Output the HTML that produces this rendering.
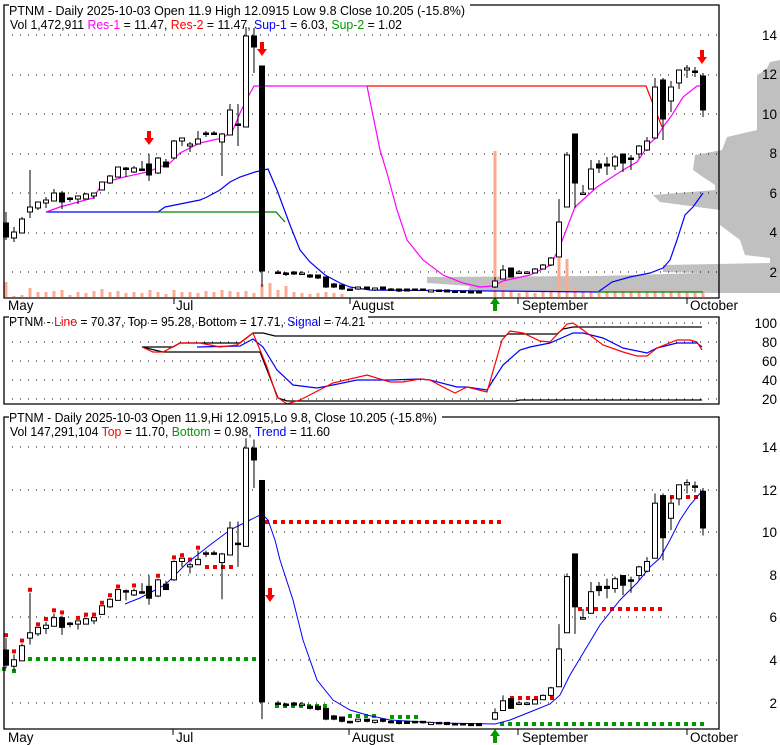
<!DOCTYPE html>
<html><head><meta charset="utf-8"><style>
html,body{margin:0;padding:0;background:#fff;overflow:hidden;}
svg{display:block;font-family:"Liberation Sans",Arial,sans-serif;font-size:12.5px;}
.ax{font-size:13.5px;}
</style></head><body>
<svg id="s" width="780" height="745" xmlns="http://www.w3.org/2000/svg">
<rect width="780" height="745" fill="#fff"/>
<polygon fill="#c0c0c0" points="780,60 770,62 766,70 757,75 757,130 727,137 722,150 695,155 693,170 700,175 715,185 715,190 653,195 660,202 720,210 720,225 740,240 745,255 770,258 770,263 663,265 663,272 700,273 600,276 427,277 427,283 470,286 468,290 719,293 780,293"/>
<g id="g"></g>
<g fill="none" stroke="#000" stroke-width="1.3">
<polyline points="470,5 719,5 719,298 4,298 4,5 9,5"/>
<polyline points="368,317 719,317 719,404 4,404 4,317 9,317"/>
<polyline points="442,417 719,417 719,729 4,729 4,417 9,417"/>
</g>
<g stroke="#000" stroke-width="1">
<line x1="174" y1="298" x2="174" y2="304"/><line x1="350" y1="298" x2="350" y2="304"/><line x1="518" y1="298" x2="518" y2="304"/><line x1="687" y1="298" x2="687" y2="304"/>
<line x1="173" y1="729" x2="173" y2="735"/><line x1="349" y1="729" x2="349" y2="735"/><line x1="518" y1="729" x2="518" y2="735"/><line x1="687" y1="729" x2="687" y2="735"/>
</g>
<g fill="#000">
<text x="9" y="15" textLength="456" lengthAdjust="spacingAndGlyphs">PTNM - Daily 2025-10-03 Open 11.9  High 12.0915  Low 9.8  Close 10.205 (-15.8%)</text>
<text x="10" y="29" textLength="392" lengthAdjust="spacingAndGlyphs">Vol 1,472,911 <tspan fill="#ff00ff">Res-1</tspan> = 11.47, <tspan fill="#ff0000">Res-2</tspan> = 11.47, <tspan fill="#0000ff">Sup-1</tspan> = 6.03, <tspan fill="#009900">Sup-2</tspan> = 1.02</text>
<text x="9" y="326" textLength="356" lengthAdjust="spacingAndGlyphs">PTNM - <tspan fill="#ff0000">Line</tspan> = 70.37, Top = 95.28, Bottom = 17.71, <tspan fill="#0000ff">Signal</tspan> = 74.21</text>
<text x="9" y="422" textLength="428" lengthAdjust="spacingAndGlyphs">PTNM - Daily 2025-10-03 Open 11.9,Hi 12.0915,Lo 9.8, Close 10.205 (-15.8%)</text>
<text x="10" y="436" textLength="320" lengthAdjust="spacingAndGlyphs">Vol 147,291,104 <tspan fill="#ff0000">Top</tspan> = 11.70, <tspan fill="#009900">Bottom</tspan> = 0.98, <tspan fill="#0000ff">Trend</tspan> = 11.60</text>
<g class="ax">
<text x="8" y="310">May</text><text x="176" y="310">Jul</text><text x="352" y="310">August</text><text x="522" y="310">September</text><text x="690" y="310">October</text>
<text x="8" y="742">May</text><text x="176" y="742">Jul</text><text x="352" y="742">August</text><text x="522" y="742">September</text><text x="690" y="742">October</text>
</g>
</g>
<g fill="#000" text-anchor="end" class="ax">
<text x="777" y="40">14</text><text x="777" y="79">12</text><text x="777" y="119">10</text><text x="777" y="158">8</text><text x="777" y="198">6</text><text x="777" y="237">4</text><text x="777" y="277">2</text>
<text x="777" y="328">100</text><text x="777" y="347">80</text><text x="777" y="366">60</text><text x="777" y="385">40</text><text x="777" y="404">20</text>
<text x="777" y="452">14</text><text x="777" y="495">12</text><text x="777" y="537">10</text><text x="777" y="580">8</text><text x="777" y="622">6</text><text x="777" y="665">4</text><text x="777" y="708">2</text>
</g>
</svg>
<script>
var NS="http://www.w3.org/2000/svg",G=document.getElementById("g");
function el(t,a){var e=document.createElementNS(NS,t);for(var k in a)e.setAttribute(k,a[k]);G.appendChild(e);return e;}
function dots(y,x1,x2,step,col,r){for(var x=x1;x<=x2;x+=step)el("rect",{x:x,y:y-(r||1)/2,width:r||1,height:r||1,fill:col||"#000"});}
[35,74.5,114,153.5,193,232.5,272].forEach(function(y){dots(Math.round(y),12,716,8);});
[323,342,361,380,399].forEach(function(y){dots(y,12,716,8);});
[447,490,532,575,617,660,703].forEach(function(y){dots(y,12,716,8);});
var vols=[[6,282],[14,296],[22,295],[30,288],[38,292],[46,292],[54,291],[62,290],[70,295],[78,292],[86,293],[94,291],[102,289],[110,292],[118,291],[126,293],[134,292],[142,293],[150,290],[158,292],[166,294],[174,290],[182,292],[190,292],[198,293],[206,291],[214,292],[222,290],[230,291],[238,292],[246,291],[254,293],[262,284],[270,283],[278,290],[286,286],[294,292],[302,293],[310,294],[318,293],[326,292],[334,293],[342,294],[495,151],[503,284],[511,291],[519,293],[527,292],[535,293],[543,292],[551,289],[559,258],[567,259],[575,288],[583,291],[591,289],[599,293],[607,292],[615,292],[623,290],[631,289],[639,290],[647,291],[655,289],[663,291],[671,290],[679,291],[687,291],[695,292],[703,291]];
vols.forEach(function(v){el("rect",{x:v[0]-1.5,y:v[1],width:3,height:297-v[1],fill:"#ffa98c"});});
var C=[[6,223,237,212,240,1],[14,232,238,227,242,0],[22,219,233,217,233,0],[30,207,212,170,218,0],[38,202,208,202,210,0],[46,200,203,197,208,0],[54,193,201,189,201,0],[62,193,202,191,209,1],[70,198,199,197,202,1],[78,196,199,196,204,0],[86,194,199,193,199,0],[94,193,196,193,199,0],[102,182,190,182,190,0],[110,176,183,175,184,0],[118,167,177,167,177,0],[126,168,169,167,177,1],[134,168,172,166,173,0],[142,169,170,161,171,1],[149,164,175,154,181,1],[158,158,173,157,174,0],[166,162,167,159,167,1],[174,141,158,140,159,0],[182,138,141,138,146,0],[190,144,146,142,152,0],[198,139,144,131,144,0],[206,133,134,131,137,1],[214,133,134,131,135,1],[222,134,142,133,176,0],[230,110,135,104,135,0],[238,124,125,104,146,1],[246,36,127,27,127,0],[254,36,47,28,73,1],[262,66,271,66,287,1],[278,272,273,270,274,1],[286,273,274,272,276,1],[294,272,274,271,275,1],[302,273,274,271,275,0],[310,275,277,274,278,1],[318,275,278,275,279,1],[326,277,287,277,288,1],[334,284,287,283,288,1],[342,285,289,285,290,1],[350,289,290,289,291,1],[358,287,289,287,290,0],[367,287,289,287,290,1],[375,288,290,288,291,0],[383,287,289,287,290,1],[391,289,290,288,291,1],[399,289,291,289,292,1],[407,289,291,289,291,1],[415,289,290,289,291,1],[423,289,290,289,291,1],[431,290,292,290,292,0],[439,290,291,290,291,1],[447,290,292,290,292,1],[455,291,292,291,292,1],[463,291,292,291,292,1],[471,291,293,291,293,1],[479,291,293,291,293,1],[495,281,287,277,288,0],[503,270,279,265,279,0],[511,268,277,268,277,1],[519,272,273,270,274,0],[527,272,273,271,274,0],[535,269,273,268,273,0],[543,265,269,264,269,0],[551,258,265,257,266,0],[559,222,257,199,257,0],[567,155,207,152,207,0],[575,134,183,134,208,1],[583,193,194,185,195,0],[591,169,189,160,189,0],[599,164,168,160,173,1],[607,164,166,157,175,1],[615,157,166,155,170,0],[623,154,163,154,172,1],[631,158,159,155,170,1],[639,146,154,145,158,0],[647,141,150,137,151,0],[655,87,138,78,138,0],[663,80,119,78,140,1],[671,87,101,81,112,0],[679,70,83,70,89,0],[687,68,70,65,78,0],[695,71,72,67,77,1],[703,76,110,73,117,1]];
function candle(c,f){var x=c[0];var bt=f(c[1]),bb=f(c[2]),wt=f(c[3]),wb=f(c[4]);
 el("line",{x1:x,y1:wt,x2:x,y2:wb,stroke:"#000","stroke-width":1});
 var h=Math.max(bb-bt,1.5);
 el("rect",{x:x-2.5,y:bt,width:5,height:h,fill:c[5]?"#000":"#fff",stroke:"#000","stroke-width":1});}
var f1=function(y){return y;},f3=function(y){return 447+(y-35)*1.08;};
function line(pts,col,f,w){el("polyline",{points:pts.map(function(p){return p[0]+","+(f?f(p[1]):p[1]);}).join(" "),fill:"none",stroke:col,"stroke-width":w||1.2});}
line([[46,212],[158,212],[165,207],[180,204],[200,200],[207,197],[220,190],[230,182],[240,177],[255,172],[268,169],[277,190],[290,225],[300,250],[310,262],[325,275],[340,283],[350,287],[370,290],[495,291],[598,292],[612,282],[630,277],[650,273],[663,268],[670,260],[677,240],[685,215],[693,207],[703,193]],"#0000ff");
line([[158,212],[276,212],[285,222]],"#008000");
line([[598,292],[703,292]],"#008000");
line([[367,86],[646,86],[662,127]],"#ff0000");
line([[46,212],[60,207],[93,198],[103,183],[120,178],[147,172],[170,163],[180,153],[200,143],[213,140],[223,138],[233,130],[240,113],[248,97],[254,86],[367,86],[380,150],[387,173],[397,210],[407,240],[423,260],[443,275],[463,283],[480,287],[493,286],[503,281],[530,275],[551,265],[562,241],[575,207],[597,187],[623,170],[637,162],[650,143],[657,137],[663,127],[672,115],[683,97],[697,86],[703,86]],"#ff00ff");
C.forEach(function(c){candle(c,f1);});
dots(659,28,265,8,"#009900",4);
dots(522,265,503,8,"#ee0000",4);dots(567,205,232,8,"#ee0000",4);
dots(698,510,553,8,"#ee0000",4);dots(609,578,665,8,"#ee0000",4);dots(497,670,695,8,"#ee0000",4);
dots(724,500,703,8,"#009900",4);dots(717,390,415,8,"#009900",4);
[277,285,293,301,309,317,325].forEach(function(x){el("rect",{x:x-2,y:704,width:4,height:4,fill:"#009900"});});
[350,358,366,374].forEach(function(x){el("rect",{x:x-2,y:714,width:4,height:4,fill:"#009900"});});
el("rect",{x:2,y:667,width:4,height:4,fill:"#009900"});el("rect",{x:12,y:669,width:4,height:4,fill:"#009900"});
C.slice(0,26).forEach(function(c){if(c[5]&&c[0]!=6&&c[0]!=62)return;el("rect",{x:c[0]-2,y:f3(c[3])-5,width:4,height:4,fill:"#ee0000"});});
line([[125,604],[140,598],[165,585],[187,563],[210,545],[230,530],[250,520],[262,514],[268,520],[275,540],[280,560],[293,600],[303,640],[317,680],[333,700],[350,710],[367,715],[390,720],[440,723],[495,724],[510,720],[530,712],[550,704],[560,695],[570,675],[585,650],[600,625],[620,600],[637,583],[650,567],[660,558],[670,540],[680,520],[690,505],[703,490]],"#0000ff",null,1);
C.forEach(function(c){candle(c,f3);});
line([[142,347],[173,347],[180,343],[240,343],[253,333],[263,333],[275,336],[505,336],[508,334],[557,334],[563,329],[573,327],[702,327]],"#000");
line([[142,347],[163,352],[177,352],[260,352],[278,398],[287,401],[515,401],[520,400],[702,400]],"#000");
line([[197,347],[240,346],[253,339],[263,347],[277,370],[293,385],[317,388],[333,385],[357,380],[390,380],[420,379],[430,380],[457,387],[467,387],[487,390],[503,365],[520,350],[530,347],[550,343],[573,333],[583,333],[603,338],[623,348],[647,353],[657,348],[677,343],[697,343],[702,347]],"#0000ff");
line([[142,347],[153,352],[163,352],[180,343],[200,343],[220,347],[237,345],[253,333],[267,367],[277,397],[287,404],[300,400],[333,383],[367,375],[390,382],[403,382],[420,379],[430,380],[443,387],[455,393],[467,387],[487,392],[502,340],[510,331],[523,333],[540,341],[550,342],[567,324],[573,323],[583,330],[603,345],[623,352],[637,356],[647,356],[657,348],[677,340],[690,340],[697,342],[702,350]],"#ff0000");
function arrow(x,y,dir,col){if(dir<0){el("rect",{x:x-2,y:y,width:4,height:8,fill:col});el("polygon",{points:(x-5)+","+(y+7)+" "+(x+5)+","+(y+7)+" "+x+","+(y+14),fill:col});}
else{el("polygon",{points:(x-5)+","+(y+7)+" "+(x+5)+","+(y+7)+" "+x+","+y,fill:col});el("rect",{x:x-2,y:y+6,width:4,height:8,fill:col});}}
arrow(149,131,-1,"#ff0000");arrow(262,42,-1,"#ff0000");arrow(702,50,-1,"#ff0000");arrow(270,588,-1,"#ff0000");
arrow(495,297,1,"#009900");arrow(495,729,1,"#009900");
</script>
</body></html>
